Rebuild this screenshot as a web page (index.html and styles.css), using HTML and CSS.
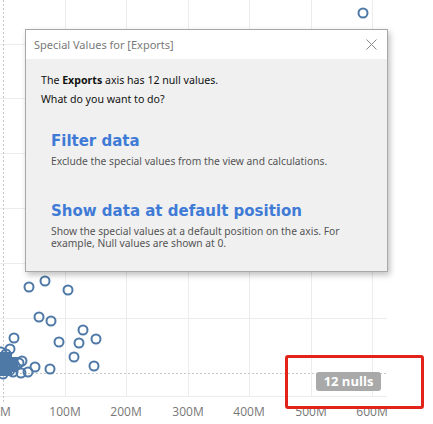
FILE: index.html
```html
<!DOCTYPE html>
<html>
<head>
<meta charset="utf-8">
<link rel="stylesheet" href="styles.css">
</head>
<body>
<div class="chart">
  <svg class="plot" width="433" height="424" viewBox="0 0 433 424">
    <g class="grid">
      <line x1="65.5" y1="0" x2="65.5" y2="396"/>
      <line x1="126.5" y1="0" x2="126.5" y2="396"/>
      <line x1="188.5" y1="0" x2="188.5" y2="396"/>
      <line x1="249.5" y1="0" x2="249.5" y2="396"/>
      <line x1="311.5" y1="0" x2="311.5" y2="396"/>
      <line x1="372.5" y1="0" x2="372.5" y2="396"/>
      <line x1="0" y1="44.5" x2="387" y2="44.5"/>
      <line x1="0" y1="98.5" x2="387" y2="98.5"/>
      <line x1="0" y1="153.5" x2="387" y2="153.5"/>
      <line x1="0" y1="208.5" x2="387" y2="208.5"/>
      <line x1="0" y1="263.5" x2="387" y2="263.5"/>
      <line x1="0" y1="318.5" x2="387" y2="318.5"/>
      <line x1="0" y1="396.5" x2="387" y2="396.5"/>
    </g>
    <g class="zero">
      <line x1="3.5" y1="0" x2="3.5" y2="403"/>
      <line x1="0" y1="373.5" x2="387" y2="373.5"/>
    </g>
    <g class="marks">
      <circle cx="363" cy="13" r="4.5"/>
      <circle cx="29" cy="287" r="4.5"/>
      <circle cx="45" cy="281" r="4.5"/>
      <circle cx="68" cy="290" r="4.5"/>
      <circle cx="39" cy="317" r="4.5"/>
      <circle cx="51" cy="321" r="4.5"/>
      <circle cx="83" cy="330" r="4.5"/>
      <circle cx="59" cy="342" r="4.5"/>
      <circle cx="79" cy="343" r="4.5"/>
      <circle cx="96" cy="339" r="4.5"/>
      <circle cx="74" cy="357" r="4.5"/>
      <circle cx="94" cy="366" r="4.5"/>
      <circle cx="14" cy="338" r="4.5"/>
      <circle cx="10" cy="349" r="4.5"/>
      <circle cx="50" cy="369" r="4.5"/>
      <circle cx="35" cy="367" r="4.5"/>
      <circle cx="28" cy="372" r="4.5"/>
      <circle cx="21" cy="373" r="4.5"/>
      <circle cx="19" cy="363" r="4.5"/>
      <circle cx="22" cy="361" r="4.5"/>
      <circle cx="15" cy="366" r="4.5"/>
      <circle cx="10" cy="370" r="4.5"/>
      <circle cx="4" cy="360" r="4.5"/>
      <circle cx="2" cy="369" r="4.5"/>
      <circle cx="6" cy="354" r="4.5"/>
      <circle cx="1" cy="352" r="4.5"/>
      <circle cx="8" cy="364" r="4.5"/>
      <circle cx="3" cy="374" r="4.5"/>
      <circle cx="13" cy="372" r="4.5"/>
    </g>
    <g class="fill">
      <rect x="0" y="352" width="12" height="24"/>
      <rect x="0" y="357" width="18" height="15"/>
    </g>
    <g class="ticks">
      <text x="2" y="416">0M</text>
      <text x="65" y="416">100M</text>
      <text x="126" y="416">200M</text>
      <text x="188" y="416">300M</text>
      <text x="249" y="416">400M</text>
      <text x="311" y="416">500M</text>
      <text x="372" y="416">600M</text>
    </g>
  </svg>

  <div class="nulls">12 nulls</div>
  <div class="highlight"></div>

  <div class="dialog">
    <div class="titlebar">
      <span class="title">Special Values for [Exports]</span>
      <svg class="close" width="11" height="11" viewBox="0 0 11 11"><path d="M0.5 0.5 L10.5 10.5 M10.5 0.5 L0.5 10.5"/></svg>
    </div>
    <div class="content">
      <p class="intro">The <b>Exports</b> axis has 12 null values.</p>
      <p class="intro">What do you want to do?</p>
      <div class="option first">
        <div class="opt-title">Filter data</div>
        <div class="opt-desc">Exclude the special values from the view and calculations.</div>
      </div>
      <div class="option">
        <div class="opt-title">Show data at default position</div>
        <div class="opt-desc">Show the special values at a default position on the axis. For example, Null values are shown at 0.</div>
      </div>
    </div>
  </div>
</div>
</body>
</html>
```
FILE: styles.css
```css
html, body {
  margin: 0;
  padding: 0;
  background: #ffffff;
}
.chart {
  position: relative;
  width: 433px;
  height: 424px;
  overflow: hidden;
  font-family: "Noto Sans", "Open Sans", sans-serif;
}
.plot {
  position: absolute;
  left: 0;
  top: 0;
}
.grid line {
  stroke: #ececec;
  stroke-width: 1;
}
.zero line {
  stroke: #c8c8c8;
  stroke-width: 1;
  stroke-dasharray: 2 2;
}
.marks circle {
  fill: none;
  stroke: #4e79a7;
  stroke-width: 2;
}
.fill rect {
  fill: #4e79a7;
}
.ticks text {
  font-family: "Open Sans", "Noto Sans", sans-serif;
  font-size: 12px;
  fill: #777777;
  text-anchor: middle;
}
.nulls {
  position: absolute;
  left: 316px;
  top: 372px;
  width: 65px;
  height: 19px;
  border-radius: 3px;
  background: #a9a9a9;
  color: #ffffff;
  font-family: "Open Sans", "Noto Sans", sans-serif;
  font-weight: 700;
  font-size: 13px;
  line-height: 19px;
  text-align: center;
}
.highlight {
  position: absolute;
  left: 285px;
  top: 355px;
  width: 133px;
  height: 48px;
  border: 3px solid #e2231a;
  border-radius: 3px;
}
.dialog {
  position: absolute;
  left: 25px;
  top: 29px;
  width: 361px;
  height: 241px;
  border: 1px solid #a8a8a8;
  background: #f0f0f0;
  box-shadow: 2px 3px 6px rgba(0, 0, 0, 0.25);
  display: flex;
  flex-direction: column;
}
.titlebar {
  height: 29px;
  background: #ffffff;
  display: flex;
  align-items: center;
  justify-content: space-between;
  padding: 0 10px 0 8px;
}
.title {
  font-size: 11px;
  color: #7a7a7a;
}
.close path {
  stroke: #8a8a8a;
  stroke-width: 1;
  fill: none;
}
.content {
  padding: 12px 15px 0 15px;
}
.intro {
  margin: 0;
  font-size: 10.6px;
  line-height: 19px;
  color: #111111;
}
.intro b {
  font-weight: 700;
}
.option {
  padding-left: 10px;
  margin-top: 33px;
}
.option.first {
  margin-top: 21px;
}
.opt-title {
  font-family: "DejaVu Sans", Verdana, sans-serif;
  font-weight: 700;
  font-size: 15px;
  line-height: 22px;
  color: #3f7bd6;
}
.opt-desc {
  font-size: 10.25px;
  line-height: 12px;
  color: #555555;
  margin-top: 3px;
}
```
